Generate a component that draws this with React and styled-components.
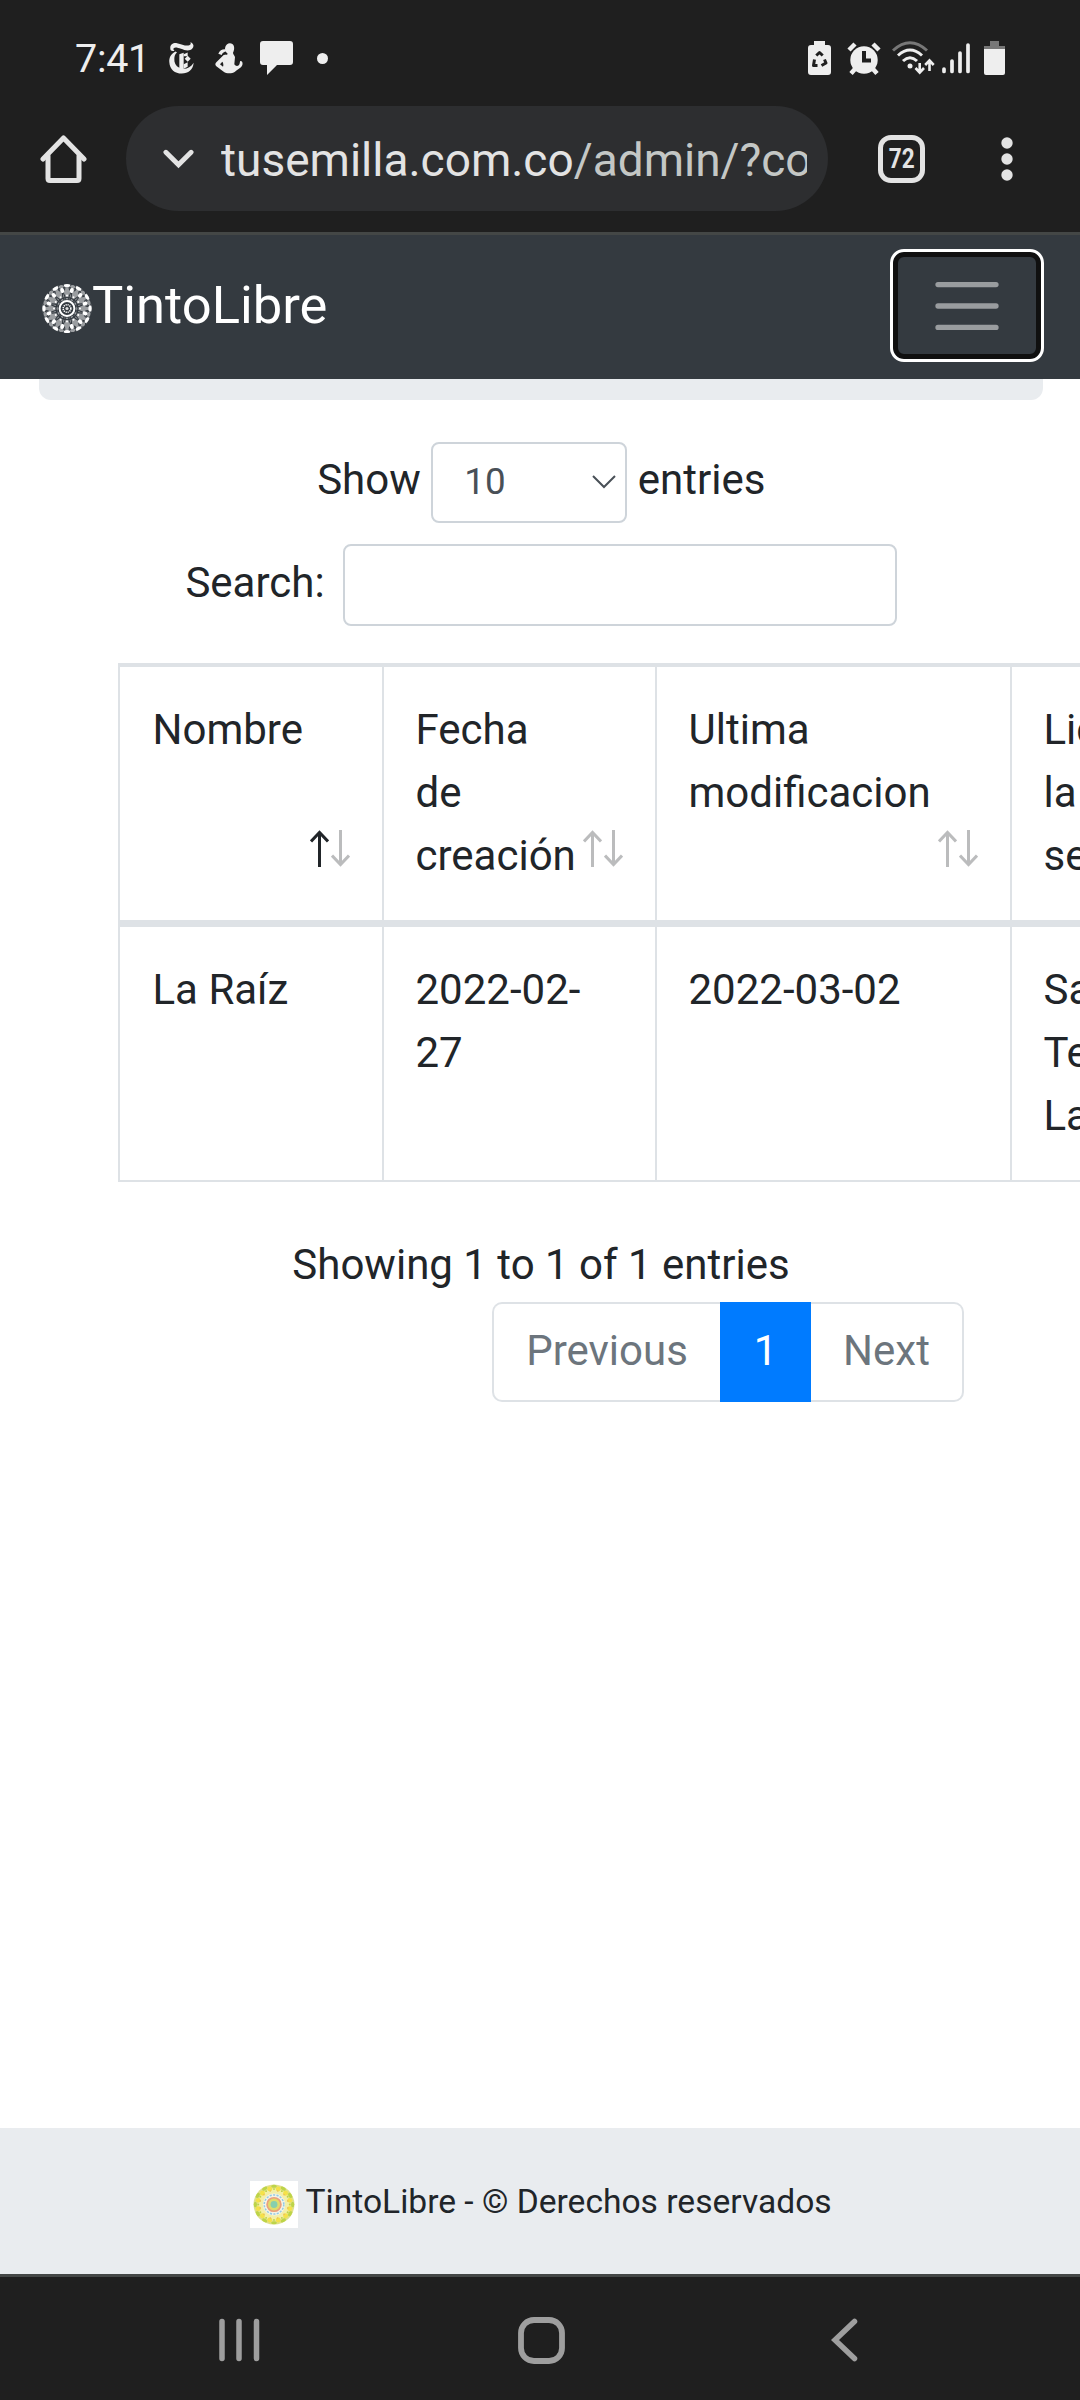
import React from 'react';
import styled, { createGlobalStyle } from 'styled-components';

const Global = createGlobalStyle`
  *, *::before, *::after { box-sizing: border-box; }
  html, body { margin: 0; background: #fff; overflow: hidden; }
`;

const Screen = styled.div`
  width: 1080px;
  height: 2400px;
  overflow: hidden;
  display: flex;
  flex-direction: column;
  background: #fff;
  color: #212529;
  font: 400 42px/63px Roboto, sans-serif;
`;

const BrowserChrome = styled.header`
  flex: none;
  height: 235px;
  background: #1f1f1f;
  border-bottom: 3px solid #444746;
`;

const StatusBar = styled.div`
  height: 106px;
  padding: 10px 75px 0 75px;
  display: flex;
  align-items: center;
  justify-content: space-between;
`;

const StatusGroup = styled.div`
  display: flex;
  align-items: center;
`;

const Clock = styled.span`
  width: 94px;
  padding-top: 2px;
  color: #eee;
  font-size: 39.5px;
  line-height: 50px;
  letter-spacing: -0.3px;
`;

const Icon = styled.svg`
  display: block;
  flex: none;
  margin-left: ${(p) => p.$gap || 0}px;
`;

const AddressRow = styled.div`
  height: 105px;
  display: flex;
  align-items: center;
  padding-left: 40px;
`;

const AddressPill = styled.div`
  width: 702px;
  height: 105px;
  margin: 0 50px 0 38px;
  padding-left: 37px;
  border-radius: 53px;
  background: #2d2e30;
  display: flex;
  align-items: center;
`;

const Url = styled.div`
  width: 586px;
  margin: 2px 0 0 27px;
  overflow: hidden;
  white-space: nowrap;
  color: #e3e3e3;
  font-size: 46px;
  line-height: 64px;
`;

const UrlPath = styled.span`
  color: #c4c7c5;
`;

const TabCount = styled.div`
  width: 47px;
  height: 48px;
  border: 5px solid #e3e3e3;
  border-radius: 13px;
  color: #e3e3e3;
  display: flex;
  align-items: center;
  justify-content: center;
  font-size: 27.5px;
  font-weight: 700;
  line-height: 36px;
`;

const TabDigits = styled.span`
  transform: scaleX(0.82);
`;

const Navbar = styled.nav`
  flex: none;
  height: 144px;
  padding: 0 36px 0 42px;
  background: #343a40;
  display: flex;
  align-items: center;
  justify-content: space-between;
`;

const Brand = styled.div`
  display: flex;
  align-items: center;
  padding-top: 3px;
  color: #fff;
  font-size: 52.5px;
  line-height: 79px;
`;

const BrandName = styled.span`
  margin-top: -6px;
`;

const Toggler = styled.button`
  width: 154px;
  height: 113px;
  padding: 0;
  margin: -3px 0 0;
  border: 3px solid #fff;
  border-radius: 14px;
  background: transparent;
  box-shadow: inset 0 0 0 5px #101010;
  display: flex;
  align-items: center;
  justify-content: center;
`;

const Main = styled.main`
  flex: 1;
  min-height: 0;
  display: flex;
  flex-direction: column;
`;

const Banner = styled.div`
  height: 21px;
  margin: 0 37px 0 39px;
  border-radius: 0 0 12px 12px;
  background: #e9ecef;
`;

const Control = styled.label`
  display: flex;
  align-items: center;
  justify-content: center;
  height: 82px;
  margin-top: ${(p) => p.$top}px;
  gap: ${(p) => p.$gap}px;
  padding-left: ${(p) => p.$shift || 0}px;
`;

const ControlText = styled.span`
  margin-top: -5px;
`;

const LengthSelect = styled.span`
  width: 196px;
  height: 81px;
  padding: 0 9px 1px 31px;
  border: 2.6px solid #ced4da;
  border-radius: 8px;
  color: #495057;
  font-size: 36.75px;
  line-height: 55px;
  display: flex;
  align-items: center;
  justify-content: space-between;
`;

const SearchInput = styled.input`
  width: 554px;
  height: 82px;
  padding: 0 20px;
  border: 2.6px solid #ced4da;
  border-radius: 8px;
  background: #fff;
  outline: none;
  font: inherit;
`;

const TableArea = styled.div`
  margin: 37px 0 0 118px;
  overflow: hidden;
`;

const Table = styled.div`
  width: 1240px;
  border: 2px solid #dee2e6;
  border-top-width: 4px;
  display: flex;
  flex-direction: column;
`;

const Row = styled.div`
  display: grid;
  grid-template-columns: 264px 273px 355px 344px;
  height: ${(p) => (p.$head ? 260 : 253)}px;
  border-bottom: ${(p) => (p.$head ? '7px solid #dee2e6' : 'none')};
`;

const Cell = styled.div`
  position: relative;
  padding: 31px 0 0 31.5px;
  border-right: 2px solid #dee2e6;
  white-space: pre-line;

  &:first-child {
    padding-left: 32.5px;
  }
`;

const SortMark = styled.span`
  position: absolute;
  right: 32px;
  bottom: 53px;
  display: flex;
  gap: 2px;
`;

const Info = styled.div`
  margin-top: 51px;
  padding-left: 2px;
  text-align: center;
`;

const Pagination = styled.div`
  display: flex;
  width: 472px;
  height: 100px;
  margin: 6px 0 0 492px;
`;

const PageLink = styled.button`
  width: ${(p) => p.$w}px;
  padding: 0 0 3px;
  border: 2.6px solid ${(p) => (p.$active ? '#007bff' : '#dee2e6')};
  border-left-width: ${(p) => (p.$side === 'right' ? 0 : 2.6)}px;
  border-right-width: ${(p) => (p.$side === 'left' ? 0 : 2.6)}px;
  border-radius: ${(p) => (p.$side === 'left' ? '10px 0 0 10px' : p.$side === 'right' ? '0 10px 10px 0' : 0)};
  background: ${(p) => (p.$active ? '#007bff' : '#fff')};
  color: ${(p) => (p.$active ? '#fff' : '#6c757d')};
  font: inherit;
`;

const Footer = styled.footer`
  flex: none;
  height: 146px;
  padding: 0 0 0 250px;
  background: #e9ecef;
  display: flex;
  align-items: center;
  gap: 7.5px;
  font-size: 33.6px;
  line-height: 50px;
`;

const FooterLogo = styled.div`
  padding-top: 7px;
`;

const FooterText = styled.span`
  margin-top: 1px;
`;

const SystemBar = styled.div`
  flex: none;
  height: 126px;
  padding: 3px 222px 0 218px;
  border-top: 3px solid #444746;
  background: #1f1f1f;
  display: grid;
  grid-template-columns: 43px 1fr 27px;
  align-items: center;
`;

const HomeKey = styled.div`
  padding-left: 257px;
`;

const ring = (n, r, offset = 0) =>
  Array.from({ length: n }, (_, i) => {
    const a = ((i + offset) / n) * Math.PI * 2;
    return [25 + r * Math.sin(a), 25 - r * Math.cos(a), (a * 180) / Math.PI];
  });

function WhiteMandala() {
  return (
    <Icon width="50" height="51" viewBox="0 0 50 50">
      <circle cx="25" cy="25" r="24.6" fill="#fff" fillOpacity=".5" />
      <g fill="none" stroke="#343a40" strokeWidth="1.1">
        {ring(12, 15).map(([x, y, a], i) => (
          <ellipse key={i} cx={x} cy={y} rx="4.6" ry="8.4" transform={`rotate(${a} ${x} ${y})`} />
        ))}
        {ring(12, 21.5, 0.5).map(([x, y], i) => <circle key={i} cx={x} cy={y} r="3.4" />)}
        <circle cx="25" cy="25" r="11" />
      </g>
      <g fill="#fff">
        {ring(12, 18.6, 0.5).map(([x, y, a], i) => (
          <ellipse key={i} cx={x} cy={y} rx="2" ry="2.5" transform={`rotate(${a} ${x} ${y})`} />
        ))}
        {ring(12, 23).map(([x, y, a], i) => (
          <ellipse key={i} cx={x} cy={y} rx="3.2" ry="1.6" transform={`rotate(${a} ${x} ${y})`} />
        ))}
        {ring(12, 13).map(([x, y], i) => <circle key={i} cx={x} cy={y} r="1" />)}
      </g>
      <circle cx="25" cy="25" r="9.2" fill="#343a40" />
      <circle cx="25" cy="25" r="7.4" fill="none" stroke="#fff" strokeWidth="2" />
      <circle cx="25" cy="25" r="3.8" fill="none" stroke="#fff" strokeWidth="1.6" strokeDasharray="1.2 .8" />
      <circle cx="25" cy="25" r="1.6" fill="#ddd" />
    </Icon>
  );
}

function ColorMandala() {
  return (
    <Icon width="48" height="47" viewBox="0 0 50 50" preserveAspectRatio="none">
      <rect width="50" height="50" fill="#fff" />
      <circle cx="25" cy="25" r="21.3" fill="#dfe08a" />
      <circle cx="25" cy="25" r="17" fill="#f3efa8" />
      <g fill="#bdd448">
        {ring(12, 19.4).map(([x, y, a], i) => (
          <ellipse key={i} cx={x} cy={y} rx="3" ry="1.7" transform={`rotate(${a} ${x} ${y})`} />
        ))}
        {ring(12, 16.4).map(([x, y], i) => <circle key={i} cx={x} cy={y} r="1" />)}
      </g>
      <g fill="#f4e24a">
        {ring(12, 17, 0.5).map(([x, y], i) => <circle key={i} cx={x} cy={y} r="2.6" />)}
      </g>
      <g fill="#f0b25c">
        {ring(12, 14.8, 0.5).map(([x, y], i) => <circle key={i} cx={x} cy={y} r=".8" />)}
      </g>
      <circle cx="25" cy="25" r="11.6" fill="#f6f3e6" />
      <circle cx="25" cy="25" r="10.2" fill="none" stroke="#93cbe4" strokeWidth="1.6" strokeDasharray="2.2 1.4" />
      <circle cx="25" cy="25" r="7.2" fill="#e0dc6c" stroke="#eba07c" strokeWidth="1.8" />
      <circle cx="25" cy="25" r="3.6" fill="#86cfae" />
    </Icon>
  );
}

function Sort({ asc }) {
  return (
    <SortMark>
      <Icon width="19" height="37" viewBox="0 0 19 37" fill="none" stroke="#212529" strokeWidth="3" opacity={asc ? 1 : 0.3}>
        <path d="M9.5 37V2M1 11.5L9.5 2.5L18 11.5" />
      </Icon>
      <Icon width="19" height="37" viewBox="0 0 19 37" fill="none" stroke="#212529" strokeWidth="3" opacity="0.3">
        <path d="M9.5 0V35M1 25.5L9.5 34.5L18 25.5" />
      </Icon>
    </SortMark>
  );
}

const headings = [
  { text: 'Nombre', asc: true },
  { text: 'Fecha\nde\ncreación' },
  { text: 'Ultima\nmodificacion' },
  { text: 'Lic\nla\nse' },
];
const values = ['La Raíz', '2022-02-\n27', '2022-03-02', 'Sa\nTe\nLa'];

export default function App() {
  return (
    <Screen>
      <Global />
      <BrowserChrome>
        <StatusBar>
          <StatusGroup>
            <Clock>7:41</Clock>
            <Icon width="25" height="32" viewBox="0 0 75 95" fill="#eee">
              <path d="M4 20C2 8 12 1 24 3C38 5 48 12 58 10C64 9 67 5 64 0C74 3 76 12 70 19C62 28 48 25 36 20C26 16 18 14 14 18C12 21 14 24 17 26C9 28 4 26 4 20Z" />
              <path d="M20 28C4 36 0 48 1 60C2 82 18 94 38 94C58 94 72 84 74 62C66 74 56 80 44 80L44 32L31 36V77C20 72 15 62 16 50C16 42 18 36 24 31Z" />
              <path d="M56 41L65 50L56 59L47 50Z" />
              <path d="M44 36L56 31V42H44ZM44 66L56 60V74L44 80Z" />
            </Icon>
            <Icon $gap={21} width="28" height="32" viewBox="0 0 84 94" fill="#eee">
              <path d="M30 18C32 4 44 0 52 5C60 11 58 24 54 31C54 36 58 38 60 44L58 66C62 72 68 72 72 68C75 64 74 58 76 56C82 54 84 62 82 68C78 78 66 82 60 88C50 95 34 94 26 88L4 72C0 68 0 64 4 60L26 38C32 36 38 38 38 34C34 32 30 26 30 18Z" />
              <path d="M10 34C14 24 22 20 32 21L34 27C28 28 22 32 20 38Z" />
              <path d="M22 58L15 66L24 73C26 68 25 62 22 58Z" fill="#1f1f1f" />
            </Icon>
            <Icon $gap={17} width="33" height="34" viewBox="0 0 33 34" fill="#eee">
              <path d="M3 0H30Q33 0 33 3V21Q33 24 30 24H17L7 34V24H3Q0 24 0 21V3Q0 0 3 0Z" />
            </Icon>
            <Icon $gap={24} width="11" height="11" viewBox="0 0 10 10"><circle cx="5" cy="5" r="5" fill="#eee" /></Icon>
          </StatusGroup>
          <StatusGroup>
            <Icon width="23" height="34" viewBox="0 0 23 34">
              <path d="M6 0H17V4H20Q23 4 23 7V31Q23 34 20 34H3Q0 34 0 31V7Q0 4 3 4H6Z" fill="#eee" />
              <path d="M8.3 14.500L11.500 11.500L14.700 14.500M16.500 18.500L18 22L13.500 24.500M9.500 24.500H5.500L6.500 18.500" fill="none" stroke="#1f1f1f" strokeWidth="3" strokeLinejoin="round" />
            </Icon>
            <Icon $gap={16} width="34" height="33" viewBox="0 0 34 33" fill="none" stroke="#eee">
              <circle cx="17" cy="18" r="13.700" fill="#eee" stroke="none" />
              <path d="M2 8L8 2M32 8L26 2" strokeWidth="4.500" />
              <path d="M8 27L4 31.500M26 27L30 31.500" strokeWidth="4.500" />
              <path d="M17 9V18.500H24" stroke="#1f1f1f" strokeWidth="4" />
            </Icon>
            <Icon $gap={11} width="43" height="34" viewBox="0 0 43 34" fill="none" stroke="#eee" strokeWidth="3">
              <path d="M1 9.500Q18-6 35 9.500" stroke="#777" />
              <path d="M6 14.500Q18 3.500 30 14.500M11 20Q18 13.500 25 20" />
              <circle cx="18" cy="25" r="2.500" fill="#eee" stroke="none" />
              <path d="M27.700 22V31M23.500 27L27.700 31.500L32 27M37.500 30V20M33.200 24L37.500 19.500L41.700 24" strokeWidth="2.600" />
            </Icon>
            <Icon $gap={7} width="28" height="32" viewBox="0 0 28 32" stroke="#eee" strokeWidth="3.700" strokeLinecap="round">
              <path d="M2 27V29.500M10 19V29.500M18 11V29.500M26 3V29.500" />
            </Icon>
            <Icon $gap={14} width="21" height="34" viewBox="0 0 21 34">
              <path d="M6 0H15V5H21V9H0V5H6Z" fill="#777" />
              <path d="M0 8H21V32Q21 34 19 34H2Q0 34 0 32Z" fill="#eee" />
            </Icon>
          </StatusGroup>
        </StatusBar>
        <AddressRow>
          <Icon width="48" height="48" viewBox="0 0 48 48" fill="none" stroke="#e3e3e3" strokeWidth="5" strokeLinecap="round" strokeLinejoin="round">
            <path d="M3 24L23.500 3L44 24" />
            <path d="M8 21V43.500Q8 45.500 10 45.500H37Q39 45.500 39 43.500V21" />
          </Icon>
          <AddressPill>
            <Icon width="31" height="20" viewBox="0 0 32 20" fill="none" stroke="#e3e3e3" strokeWidth="5" strokeLinecap="round">
              <path d="M3 3L16 16L29 3" />
            </Icon>
            <Url>tusemilla.com.co<UrlPath>/admin/?co</UrlPath></Url>
          </AddressPill>
          <TabCount><TabDigits>72</TabDigits></TabCount>
          <Icon $gap={76} width="12" height="44" viewBox="0 0 12 44" fill="#e3e3e3">
            <circle cx="6" cy="6" r="5.700" /><circle cx="6" cy="22" r="5.700" /><circle cx="6" cy="38" r="5.700" />
          </Icon>
        </AddressRow>
      </BrowserChrome>
      <Navbar>
        <Brand>
          <WhiteMandala />
          <BrandName>TintoLibre</BrandName>
        </Brand>
        <Toggler aria-label="Menu">
          <Icon width="64" height="50" viewBox="0 0 64 50" stroke="#999c9f" strokeWidth="5.300" strokeLinecap="round">
            <path d="M3 3.600H61M3 25H61M3 46.400H61" />
          </Icon>
        </Toggler>
      </Navbar>
      <Main>
        <Banner />
        <Control $top={41} $gap={10.5} $shift={2.5}>
          <ControlText>Show</ControlText>
          <LengthSelect>
            10
            <Icon width="24" height="14" viewBox="0 0 24 14" fill="none" stroke="#495057" strokeWidth="2">
              <path d="M1 1L12 12L23 1" />
            </Icon>
          </LengthSelect>
          <ControlText>entries</ControlText>
        </Control>
        <Control $top={21} $gap={18} $shift={2}>
          <ControlText>Search:</ControlText>
          <SearchInput />
        </Control>
        <TableArea>
          <Table>
            <Row $head>
              {headings.map((h) => (
                <Cell key={h.text}>{h.text}<Sort asc={h.asc} /></Cell>
              ))}
            </Row>
            <Row>
              {values.map((v) => <Cell key={v}>{v}</Cell>)}
            </Row>
          </Table>
        </TableArea>
        <Info>Showing 1 to 1 of 1 entries</Info>
        <Pagination>
          <PageLink $w={228} $side="left">Previous</PageLink>
          <PageLink $w={91} $active>1</PageLink>
          <PageLink $w={153} $side="right">Next</PageLink>
        </Pagination>
      </Main>
      <Footer>
        <FooterLogo><ColorMandala /></FooterLogo>
        <FooterText>TintoLibre - © Derechos reservados</FooterText>
      </Footer>
      <SystemBar>
        <Icon width="43" height="44" viewBox="0 0 43 44" stroke="#9e9e9e" strokeWidth="5.500" strokeLinecap="round">
          <path d="M4 3.500V40.500M21 3.500V40.500M38.500 3.500V40.500" />
        </Icon>
        <HomeKey>
          <Icon width="47" height="47" viewBox="0 0 47 47" fill="none" stroke="#9e9e9e" strokeWidth="5.800">
            <rect x="3" y="3" width="41" height="41" rx="13" />
          </Icon>
        </HomeKey>
        <Icon width="27" height="44" viewBox="0 0 27 44" fill="none" stroke="#9e9e9e" strokeWidth="5.500" strokeLinecap="round">
          <path d="M23.500 3.500L4 22L23.500 40.500" />
        </Icon>
      </SystemBar>
    </Screen>
  );
}
